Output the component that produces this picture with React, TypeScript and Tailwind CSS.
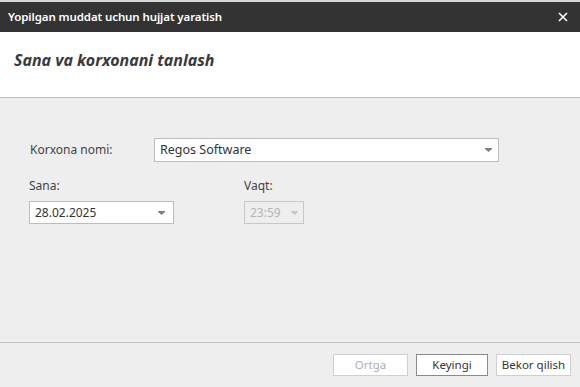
import React from 'react';

const font = { fontFamily: '"Noto Sans", "Open Sans", sans-serif' };

const Caret: React.FC<{ light?: boolean }> = ({ light }) => (
  <svg width="7" height="4" viewBox="0 0 7 4" className="shrink-0">
    <path d="M0 0h7v1L3.5 4 0 1z" fill={light ? '#c8c8c8' : '#808080'} />
  </svg>
);

export default function App() {
  return (
    <div className="w-[580px] h-[387px] flex flex-col bg-[#eeeeee] overflow-hidden text-[#444]" style={font}>
      <div className="h-[2px] bg-[#d6d6d6]" />
      {/* title bar */}
      <div className="h-[30px] bg-[#333333] flex items-center justify-between pl-[8px] pr-[12px]">
        <span className="text-white text-[11.5px] font-semibold tracking-[-0.1px]">Yopilgan muddat uchun hujjat yaratish</span>
        <svg width="10" height="10" viewBox="0 0 10 10">
          <path d="M1 1l8 8M9 1l-8 8" stroke="#fff" strokeWidth="1.6" />
        </svg>
      </div>

      {/* header */}
      <div className="h-[66px] bg-white border-b border-[#bdbdbd] pl-[14px] pt-[16px]">
        <h1 className="text-[16px] font-bold italic text-[#3a3a3a]">Sana va korxonani tanlash</h1>
      </div>

      {/* body */}
      <div className="flex-1 pl-[29px] pt-[40px]">
        <div className="flex items-center h-[24px]">
          <span className="w-[125px] pl-[1px] text-[12px]">Korxona nomi:</span>
          <div className="w-[345px] h-[24px] bg-white border border-[#bdbdbd] flex items-center justify-between pl-[5px] pr-[6px]">
            <span className="text-[12.5px] text-[#333]">Regos Software</span>
            <Caret />
          </div>
        </div>

        <div className="flex gap-[70px] mt-[15px]">
          <div className="flex flex-col">
            <span className="text-[12px] h-[18px]">Sana:</span>
            <div className="mt-[6px] w-[145px] h-[23px] bg-white border border-[#bdbdbd] flex items-center justify-between pl-[5px] pr-[8px]">
              <span className="text-[12px] text-[#333]">28.02.2025</span>
              <Caret />
            </div>
          </div>
          <div className="flex flex-col">
            <span className="text-[12px] h-[18px]">Vaqt:</span>
            <div className="mt-[6px] w-[60px] h-[23px] border border-[#c8c8c8] flex items-center justify-between pl-[5px] pr-[5px]">
              <span className="text-[12px] text-[#b4b4b4]">23:59</span>
              <Caret light />
            </div>
          </div>
        </div>
      </div>

      {/* footer */}
      <div className="h-[45px] border-t border-[#c4c4c4] flex items-start justify-end gap-[8px] pr-[9px] pt-[11px]">
        <button className="w-[75px] h-[22px] bg-white border border-[#cfcfcf] text-[11.5px] text-[#aab0ba]">Ortga</button>
        <button className="w-[72px] h-[22px] bg-white border border-[#8a8a8a] text-[11.5px] text-[#333]">Keyingi</button>
        <button className="w-[75px] h-[22px] bg-white border border-[#cfcfcf] text-[11.5px] text-[#333]">Bekor qilish</button>
      </div>
    </div>
  );
}
